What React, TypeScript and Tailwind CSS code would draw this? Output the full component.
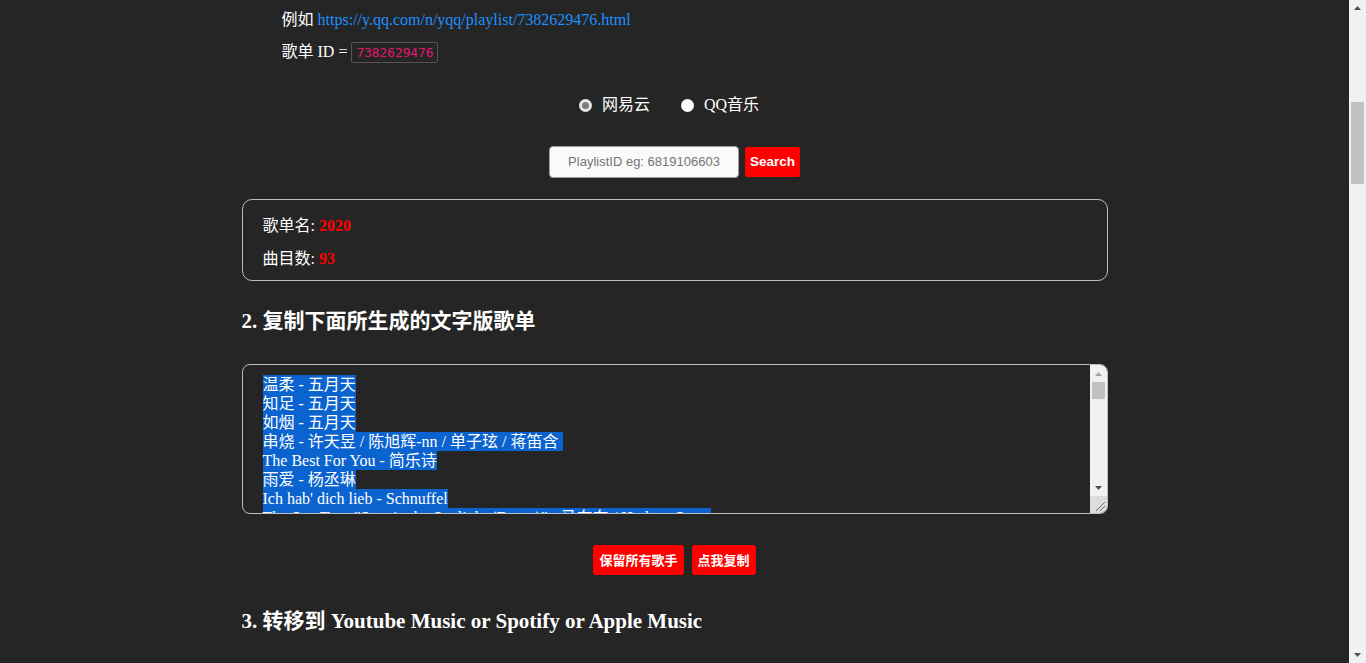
import React from "react";

const serif = "font-['Liberation_Serif','Noto_Sans_CJK_SC',serif]";

const lines = [
  "温柔 - 五月天",
  "知足 - 五月天",
  "如烟 - 五月天",
  "串烧 - 许天昱 / 陈旭辉-nn / 单子玹 / 蒋笛含 ",
  "The Best For You - 简乐诗",
  "雨爱 - 杨丞琳",
  "Ich hab' dich lieb - Schnuffel",
  "The Sun Tour \"Stay in the Sunlight (Demo)\" - 马东东 / Hudson Swan",
];

function Arrow({ dir, color }: { dir: "up" | "down"; color: string }) {
  return (
    <svg width="7" height="4" viewBox="0 0 7 4" className="block">
      {dir === "up" ? (
        <polygon points="3.5,0 7,4 0,4" fill={color} />
      ) : (
        <polygon points="0,0 7,0 3.5,4" fill={color} />
      )}
    </svg>
  );
}

export default function App() {
  return (
    <div className={`flex h-screen overflow-hidden bg-[#252525] text-white text-[16px] ${serif}`}>
      <main className="min-w-0 flex-1">
        <div className="mx-auto w-[866px] pt-1">
          <ul className="pl-10">
            <li className="flex h-8 items-center">
              <span>例如&nbsp;</span>
              <a className="text-[#1e90ff]" href="#">
                https://y.qq.com/n/yqq/playlist/7382629476.html
              </a>
            </li>
            <li className="flex h-8 items-center">
              <span>歌单 ID =&nbsp;</span>
              <code className="rounded-[2px] border border-[#555] px-1 py-[2px] font-['DejaVu_Sans_Mono',monospace] text-[12.8px] leading-[15px] text-[#e5176b]">
                7382629476
              </code>
            </li>
          </ul>

          <div className="mt-[25px] flex h-6 items-center justify-center pr-[11px]">
            <label className="flex items-center">
              <span className="flex h-[13px] w-[13px] items-center justify-center rounded-full bg-[#e6e6e6]">
                <span className="h-[7px] w-[7px] rounded-full bg-[#7d7d7d]" />
              </span>
              <span className="ml-[10px] leading-6">网易云</span>
            </label>
            <label className="ml-[31px] flex items-center">
              <span className="h-[13px] w-[13px] rounded-full bg-white" />
              <span className="ml-[10px]">QQ音乐</span>
            </label>
          </div>

          <div className="mt-[29px] flex items-center justify-center gap-[6px]">
            <div className="flex h-8 w-[190px] items-center justify-center rounded-[4px] border border-[#9a9a9a] bg-[#fafafa] font-['Liberation_Sans',sans-serif] text-[13px] text-[#757575]">
              PlaylistID eg: 6819106603
            </div>
            <button className="h-[30px] w-[55px] rounded-[2px] bg-[#ff0000] font-['Liberation_Sans',sans-serif] text-[13.5px] font-bold text-white">
              Search
            </button>
          </div>

          <div className="mt-[21px] rounded-[10px] border border-[#bdbdbd] px-5 pb-[11px] pt-4 leading-5">
            <p>
              歌单名: <span className="font-bold text-[#ff0000]">2020</span>
            </p>
            <p className="mt-[13px]">
              曲目数: <span className="font-bold text-[#ff0000]">93</span>
            </p>
          </div>

          <h3 className="mt-7 text-[21px] font-bold leading-6">2. 复制下面所生成的文字版歌单</h3>

          <div className="mt-[31px] flex h-[150px] overflow-hidden rounded-[8px] border border-[#bdbdbd]">
            <div className="min-w-0 flex-1 overflow-hidden pl-5 pt-[10px] leading-[19px]">
              {lines.map((l, i) => (
                <div key={i} className="w-fit whitespace-pre bg-[#0b63cf] text-white">
                  {l}
                </div>
              ))}
            </div>
            <div className="flex w-[17px] flex-col">
              <div className="flex flex-1 flex-col items-center bg-[#f1f1f1] pt-[7px]">
                <Arrow dir="up" color="#a3a3a3" />
                <div className="mt-[6px] h-[17px] w-[13px] bg-[#c1c1c1]" />
                <div className="flex-1" />
                <div className="pb-[6px]">
                  <Arrow dir="down" color="#505050" />
                </div>
              </div>
              <div className="flex h-[17px] items-end justify-end bg-[#dcdcdc] pb-[2px] pr-[2px]">
                <svg width="10" height="10" viewBox="0 0 10 10">
                  <line x1="1" y1="10" x2="10" y2="1" stroke="#6e6e6e" strokeWidth="1" />
                  <line x1="5" y1="10" x2="10" y2="5" stroke="#6e6e6e" strokeWidth="1" />
                </svg>
              </div>
            </div>
          </div>

          <div className="mt-[31px] flex justify-center gap-2">
            <button className="h-[30px] rounded-[3px] bg-[#ff0000] px-[6px] font-['Noto_Sans_CJK_SC',sans-serif] text-[13px] font-bold text-white">
              保留所有歌手
            </button>
            <button className="h-[30px] rounded-[3px] bg-[#ff0000] px-[6px] font-['Noto_Sans_CJK_SC',sans-serif] text-[13px] font-bold text-white">
              点我复制
            </button>
          </div>

          <h3 className="mt-[34px] text-[21px] font-bold leading-6">
            3. 转移到 Youtube Music or Spotify or Apple Music
          </h3>
        </div>
      </main>

      <aside className="flex h-screen w-[17px] flex-col items-center bg-[#f1f1f1] pt-[6px]">
        <Arrow dir="up" color="#505050" />
        <div className="mt-[92px] h-[82px] w-[13px] bg-[#c1c1c1]" />
        <div className="flex-1" />
        <div className="pb-[6px]">
          <Arrow dir="down" color="#505050" />
        </div>
      </aside>
    </div>
  );
}
